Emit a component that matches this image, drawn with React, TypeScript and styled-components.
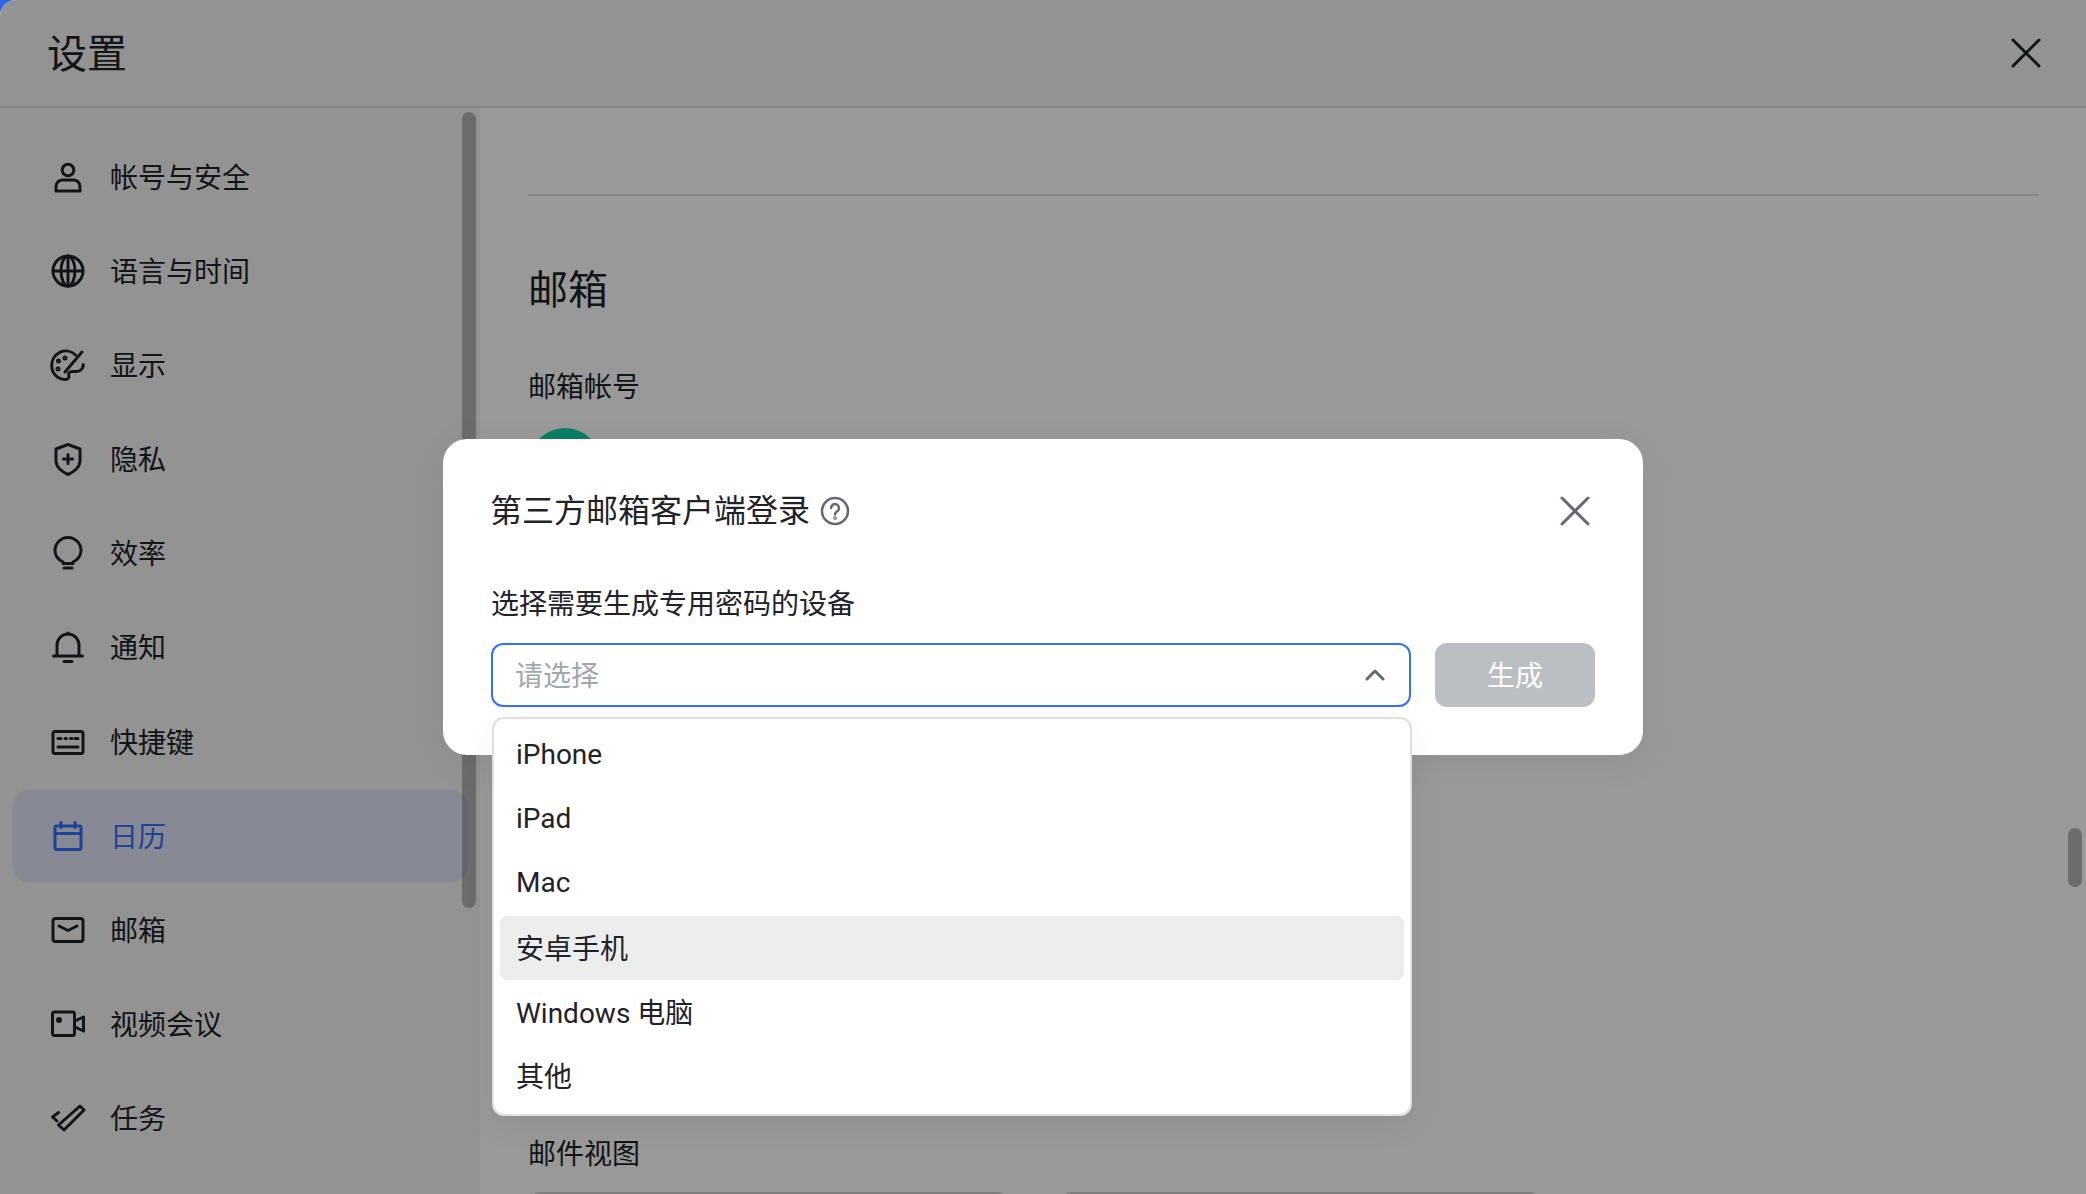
import React from "react";
import styled, { createGlobalStyle } from "styled-components";

const Global = createGlobalStyle`
  html, body { margin: 0; height: 100%; background: #2f66e6; overflow: hidden; }
  #root { height: 100%; }
  * { box-sizing: border-box; }
`;

const FONT = `Roboto, "Noto Sans CJK SC", sans-serif`;

const Win = styled.div`
  position: relative;
  width: 2086px;
  height: 1194px;
  background: #fff;
  border-top-left-radius: 16px;
  overflow: hidden;
  display: flex;
  flex-direction: column;
  font-family: ${FONT};
  color: #1f2329;
`;
const Header = styled.header`
  flex: 0 0 108px;
  background: #f4f5f5;
  border-bottom: 2px solid #dee0e3;
  display: flex;
  align-items: center;
  justify-content: space-between;
  padding: 0 45px 0 47px;
`;
const Title = styled.h1`
  margin: 4px 0 0;
  font-size: 40px;
  line-height: 56px;
  font-weight: 400;
`;
const Body = styled.div`
  flex: 1;
  display: flex;
  min-height: 0;
`;
const Side = styled.nav`
  position: relative;
  flex: 0 0 480px;
  background: #f5f6f6;
  padding: 23px 12px 0;
  display: flex;
  flex-direction: column;
  gap: 2.1px;
  overflow: hidden;
`;
const Thumb = styled.div<{ $left: number; $top: number; $h: number }>`
  position: absolute;
  left: ${(p) => p.$left}px;
  top: ${(p) => p.$top}px;
  width: 14px;
  height: ${(p) => p.$h}px;
  border-radius: 7px;
  background: #b2b4b4;
`;
const Item = styled.div<{ $active?: boolean }>`
  position: relative;
  z-index: 1;
  flex: 0 0 92px;
  width: 456px;
  border-radius: 16px;
  display: flex;
  align-items: center;
  gap: 24px;
  padding-left: 38px;
  font-size: 28px;
  line-height: 40px;
  color: ${(p) => (p.$active ? "#3370ff" : "#1f2329")};
  background: ${(p) => (p.$active ? "rgba(46,84,255,0.1)" : "transparent")};
`;
const NavLabel = styled.span`
  position: relative;
  top: 2px;
`;
const NavIcon = styled.svg`
  flex: 0 0 36px;
  width: 36px;
  height: 36px;
  fill: none;
  stroke: currentColor;
  stroke-width: 3;
  stroke-linecap: round;
  stroke-linejoin: round;
`;
const Main = styled.main`
  position: relative;
  flex: 1;
  background: #fff;
  padding: 86px 48px 0 48px;
  overflow: hidden;
`;
const Rule = styled.hr`
  margin: 0;
  border: 0;
  height: 2px;
  background: #dee0e3;
`;
const H2 = styled.h2`
  margin: 67px 0 0;
  font-size: 40px;
  line-height: 56px;
  font-weight: 400;
`;
const FieldLabel = styled.div<{ $mt: number }>`
  margin-top: ${(p) => p.$mt}px;
  font-size: 28px;
  line-height: 40px;
`;
const Avatar = styled.div`
  margin: 20px 0 0 1px;
  width: 72px;
  height: 72px;
  border-radius: 50%;
  background: #0fd2a8;
`;
const Cards = styled.div`
  margin-top: 17px;
  display: flex;
  gap: 51px;
`;
const Card = styled.div`
  width: 481px;
  height: 200px;
  border-radius: 12px;
  border: 2px solid #d0d3d6;
`;
const Backdrop = styled.div`
  position: absolute;
  inset: 0;
  background: rgba(0, 0, 0, 0.4);
  display: flex;
  align-items: center;
  justify-content: center;
  z-index: 5;
`;
const Dialog = styled.div`
  position: relative;
  width: 1200px;
  height: 316px;
  background: #fff;
  border-radius: 24px;
  padding: 48px 48px 0;
  box-shadow: 0 8px 40px rgba(0, 0, 0, 0.05);
`;
const DialogHead = styled.div`
  display: flex;
  align-items: center;
  height: 48px;
`;
const DialogTitle = styled.div`
  font-size: 32px;
  line-height: 48px;
  margin-left: -1px;
`;
const Help = styled.svg`
  width: 30px;
  height: 30px;
  margin-left: 10px;
  color: #646a73;
`;
const CloseBtn = styled.svg<{ $tone: string }>`
  width: 30px;
  height: 30px;
  stroke: ${(p) => p.$tone};
  stroke-width: 3;
  stroke-linecap: round;
  fill: none;
  flex: none;
`;
const DialogClose = styled(CloseBtn)`
  margin-left: auto;
  margin-right: 5px;
`;
const DialogLabel = styled.div`
  margin-top: 50px;
  font-size: 28px;
  line-height: 40px;
`;
const Row = styled.div`
  margin-top: 18px;
  display: flex;
  gap: 24px;
`;
const Select = styled.div`
  width: 920px;
  height: 64px;
  border: 2px solid #3370ff;
  border-radius: 12px;
  display: flex;
  align-items: center;
  justify-content: space-between;
  padding: 0 24px 0 22px;
  font-size: 28px;
  color: #a2a7ae;
`;
const Placeholder = styled.span`
  position: relative;
  top: -1px;
`;
const Chevron = styled.svg`
  width: 20px;
  height: 12px;
  fill: none;
  stroke: #646a73;
  stroke-width: 3;
  stroke-linecap: round;
  stroke-linejoin: round;
`;
const Generate = styled.div`
  width: 160px;
  height: 64px;
  border-radius: 12px;
  background: #bbbfc4;
  color: #fff;
  font-size: 28px;
  padding-bottom: 2px;
  display: flex;
  align-items: center;
  justify-content: center;
`;
const Menu = styled.div`
  position: absolute;
  left: 49px;
  top: 278px;
  width: 920px;
  height: 399px;
  background: #fff;
  border: 2px solid #dee0e3;
  border-radius: 12px;
  padding: 5px 6px;
  box-shadow: 0 12px 32px rgba(0, 0, 0, 0.06);
`;
const Option = styled.div<{ $hover?: boolean }>`
  height: 64px;
  border-radius: 8px;
  padding: 0 0 3px 16px;
  display: flex;
  align-items: center;
  font-size: 28px;
  background: ${(p) => (p.$hover ? "#eceded" : "transparent")};
`;

const Paths: Record<string, React.ReactNode> = {
  user: (<><circle cx="18" cy="11" r="5.8" /><path d="M6 32v-4.5A6.5 6.5 0 0 1 12.5 21h11a6.5 6.5 0 0 1 6.5 6.5V32z" /></>),
  globe: (<><circle cx="18" cy="18" r="15" /><ellipse cx="18" cy="18" rx="7" ry="15" /><path d="M3 18h30M18 3v30" /></>),
  palette: (<><path d="M25.5 8A14 14 0 0 0 1.8 19c0 7.5 6 13.5 13 13.5 3 0 4.5-1.500 4-4-.5-2.500 1-4 3-4h5c3.500 0 6.500-3 6.500-7" /><path d="M15 25 32 5" /><circle cx="8.5" cy="14" r="1" /><circle cx="8" cy="22" r="1" /><circle cx="15" cy="11" r="1" /></>),
  shield: (<><path d="M18 3.500 30 8v12c0 6-6 11-12 13.500C12 31 6 26 6 20V8z" /><path d="M18 13.500v9M13.500 18h9" /></>),
  bulb: (<><path d="M13 28.500v-1.500C8 24.500 5 20.500 5 15.500a13 13 0 0 1 26 0c0 5-3 9-8 11.500v1.500z" /><path d="M14 33h8" /></>),
  bell: (<><path d="M7 27V16a11 11 0 0 1 22 0v11M3.500 27h29M14 32.500h8M18 4v1" /></>),
  keyboard: (<><rect x="3" y="7.500" width="30" height="22" rx="2" /><path d="M8 14.500h3M15 14.500h1.500M20.500 14.500h1.500M25 14.500h3M8 23h20" /></>),
  calendar: (<><rect x="5" y="8" width="26" height="23.500" rx="1.500" /><path d="M5 15.500h26M11 4.500v5M25 4.500v5" /></>),
  mail: (<><rect x="3" y="6.500" width="30" height="23" rx="2.500" /><path d="M9 14l9 4.500 9-4.500" /></>),
  video: (<><rect x="2.500" y="6" width="22" height="23.500" rx="2" /><path d="M25 15l8.500-4v14L25 21" /><circle cx="9" cy="14" r="1.500" /></>),
  task: (<><path d="M8.500 25 30 6l4 4-20 20z" /><path d="M8.500 12.500 2.500 17l4.500 4" /></>),
};

const nav: [string, string][] = [
  ["user", "帐号与安全"],
  ["globe", "语言与时间"],
  ["palette", "显示"],
  ["shield", "隐私"],
  ["bulb", "效率"],
  ["bell", "通知"],
  ["keyboard", "快捷键"],
  ["calendar", "日历"],
  ["mail", "邮箱"],
  ["video", "视频会议"],
  ["task", "任务"],
];
const options = ["iPhone", "iPad", "Mac", "安卓手机", "Windows 电脑", "其他"];

const X = <path d="M2 2l26 26M28 2 2 28" />;

export default function App() {
  return (
    <>
      <Global />
      <Win>
        <Header>
          <Title>设置</Title>
          <CloseBtn $tone="#1f2329" viewBox="0 0 30 30">{X}</CloseBtn>
        </Header>
        <Body>
          <Side>
            <Thumb $left={462} $top={4} $h={796} />
            {nav.map(([icon, label]) => (
              <Item key={label} $active={icon === "calendar"}>
                <NavIcon viewBox="0 0 36 36">{Paths[icon]}</NavIcon>
                <NavLabel>{label}</NavLabel>
              </Item>
            ))}
          </Side>
          <Main>
            <Rule />
            <H2>邮箱</H2>
            <FieldLabel $mt={49}>邮箱帐号</FieldLabel>
            <Avatar />
            <FieldLabel $mt={635}>邮件视图</FieldLabel>
            <Cards>
              <Card />
              <Card />
            </Cards>
            <Thumb $left={1588} $top={720} $h={59} />
          </Main>
        </Body>
        <Backdrop>
          <Dialog>
            <DialogHead>
              <DialogTitle>第三方邮箱客户端登录</DialogTitle>
              <Help viewBox="0 0 30 30" fill="none" stroke="currentColor" strokeWidth="2.5" strokeLinecap="round">
                <circle cx="15" cy="15" r="13" />
                <path d="M11 12a4 4 0 1 1 6 3.500c-1.300.8-2 1.500-2 3" />
                <circle cx="15" cy="22" r=".6" />
              </Help>
              <DialogClose $tone="#646a73" viewBox="0 0 30 30">{X}</DialogClose>
            </DialogHead>
            <DialogLabel>选择需要生成专用密码的设备</DialogLabel>
            <Row>
              <Select>
                <Placeholder>请选择</Placeholder>
                <Chevron viewBox="0 0 20 12"><path d="M2 10l8-8 8 8" /></Chevron>
              </Select>
              <Generate>生成</Generate>
            </Row>
            <Menu>
              {options.map((o) => (
                <Option key={o} $hover={o === "安卓手机"}>{o}</Option>
              ))}
            </Menu>
          </Dialog>
        </Backdrop>
      </Win>
    </>
  );
}
